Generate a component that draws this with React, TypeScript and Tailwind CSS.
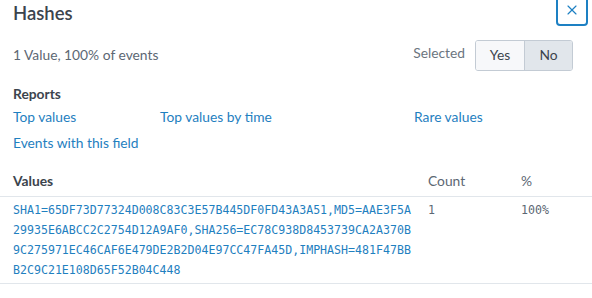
import { X } from "lucide-react";

const hash =
  "SHA1=65DF73D77324D008C83C3E57B445DF0FD43A3A51,MD5=AAE3F5A29935E6ABCC2C2754D12A9AF0,SHA256=EC78C938D8453739CA2A370B9C275971EC46CAF6E479DE2B2D04E97CC47FA45D,IMPHASH=481F47BBB2C9C21E108D65F52B04C448";

const links = [
  { name: "Top values", col: "col-start-1" },
  { name: "Top values by time", col: "col-start-2" },
  { name: "Rare values", col: "col-start-3" },
  { name: "Events with this field", col: "col-start-1 col-span-3" },
];

export default function App() {
  return (
    <div className="w-[592px] h-[298px] overflow-hidden bg-white font-['Lato',sans-serif] text-[#3c444d]">
      <div className="flex items-start justify-between pl-[13px] pr-[4px]">
        <h2 className="text-[18.5px] leading-[26px] font-semibold">Hashes</h2>
        <button
          type="button"
          className="-mt-[6px] flex h-[32px] w-[32px] items-center justify-center rounded-[4px] border-2 border-[#1d80c3] bg-white text-[#1d80c3]"
        >
          <X size={16} strokeWidth={1.75} />
        </button>
      </div>

      <div className="mt-[14px] flex h-[31px] items-center justify-between pl-[13px] pr-[19px]">
        <span className="text-[13.8px] text-[#5c6773]">1 Value, 100% of events</span>
        <div className="flex items-center gap-[10px]">
          <span className="-mt-[4px] text-[13.8px] text-[#6b7580]">Selected</span>
          <div className="flex h-[31px] overflow-hidden rounded-[3px] border border-[#c3cbd4] text-[13.8px]">
            <div className="flex w-[49px] items-center justify-center border-r border-[#c3cbd4] bg-[#f7f8fa]">Yes</div>
            <div className="flex w-[47px] items-center justify-center bg-[#e1e6eb]">No</div>
          </div>
        </div>
      </div>

      <div className="mt-[14px] pl-[13px]">
        <h3 className="text-[13.8px] leading-[18px] font-bold">Reports</h3>
        <div className="mt-[1px] grid grid-cols-[147px_254px_1fr]">
          {links.map(({ name, col }) => (
            <a key={name} className={`${col} text-[13.8px] leading-[26px] text-[#1f80c0]`}>
              {name}
            </a>
          ))}
        </div>
      </div>

      <table className="mt-[12px] w-full table-fixed border-collapse text-[13.8px]">
        <thead>
          <tr className="h-[28px] border-b border-[#e1e6eb] text-left">
            <th className="w-[428px] pl-[13px] font-bold">Values</th>
            <th className="w-[93px] font-normal text-[#5c6773]">Count</th>
            <th className="font-normal text-[#5c6773]">%</th>
          </tr>
        </thead>
        <tbody className="font-['DejaVu_Sans_Mono',monospace] text-[11.6px] leading-[20px]">
          <tr className="border-b border-[#e1e6eb] align-top">
            <td className="pl-[13px] pt-[3px] pb-[3px]">
              <div className="w-[402px] break-all text-[#1f80c0]">{hash}</div>
            </td>
            <td className="pt-[3px] text-[#5c6773]">1</td>
            <td className="pt-[3px] text-[#5c6773]">100%</td>
          </tr>
        </tbody>
      </table>
    </div>
  );
}
